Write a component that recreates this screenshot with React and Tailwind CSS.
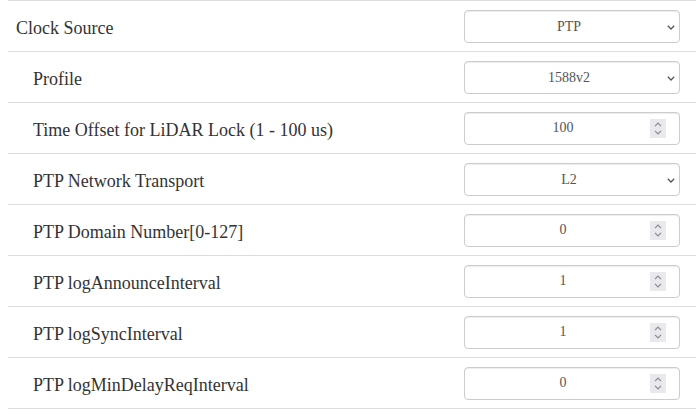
const rows = [
    { label: "Clock Source", type: "select", value: "PTP", options: ["PTP", "NTP", "Internal"], indent: false },
    { label: "Profile", type: "select", value: "1588v2", options: ["1588v2", "802.1AS"], indent: true },
    { label: "Time Offset for LiDAR Lock (1 - 100 us)", type: "number", value: "100", indent: true },
    { label: "PTP Network Transport", type: "select", value: "L2", options: ["L2", "UDP/IP"], indent: true },
    { label: "PTP Domain Number[0-127]", type: "number", value: "0", indent: true },
    { label: "PTP logAnnounceInterval", type: "number", value: "1", indent: true },
    { label: "PTP logSyncInterval", type: "number", value: "1", indent: true },
    { label: "PTP logMinDelayReqInterval", type: "number", value: "0", indent: true },
];

function Spinner() {
    return (
        <span className="absolute right-[14px] top-[7px] w-4 h-[19px] bg-[#e9e9ed] flex flex-col items-center justify-center gap-[3px] pointer-events-none">
            <svg width="8" height="5" viewBox="0 0 8 5" fill="none" stroke="#8a8a8a" strokeWidth="1.2">
                <path d="M1 4.2 L4 1.2 L7 4.2" />
            </svg>
            <svg width="8" height="5" viewBox="0 0 8 5" fill="none" stroke="#8a8a8a" strokeWidth="1.2">
                <path d="M1 0.8 L4 3.8 L7 0.8" />
            </svg>
        </span>
    );
}

function App() {
    return (
        <div className="w-[696px] h-[416px] overflow-hidden bg-white font-['Liberation_Serif',serif] text-[#333]">
            <table className="ml-2 w-[688px] border-collapse">
                <tbody>
                    {rows.map((row) =>
                        <tr key={row.label} className="border-t border-b border-[#dddddd] h-[51px]">
                            <td className={row.indent ? "pl-[25px] pt-1 text-[18px] align-middle" : "pl-2 pt-1 text-[18px] align-middle"}>
                                {row.label}
                            </td>
                            <td className="w-[232px] pr-4 align-middle">
                                {row.type === "select"
                                    ? <div className="relative w-[216px]">
                                        <select
                                            defaultValue={row.value}
                                            className="appearance-none block w-[216px] h-[33px] pl-2 pr-[14px] text-[14px] text-center text-[#555] bg-white border border-[#cccccc] rounded-[4px] shadow-[inset_0_1px_1px_rgba(0,0,0,0.075)]"
                                        >
                                            {row.options.map((o) => <option key={o}>{o}</option>)}
                                        </select>
                                        <svg className="absolute right-[5px] top-[15px] pointer-events-none" width="8" height="5" viewBox="0 0 8 5" fill="none" stroke="#555" strokeWidth="1.3">
                                            <path d="M0.8 0.8 L4 4 L7.2 0.8" />
                                        </svg>
                                    </div>
                                    : <div className="relative w-[216px]">
                                        <input
                                            type="text"
                                            inputMode="numeric"
                                            defaultValue={row.value}
                                            className="block w-[216px] h-[33px] pl-3 pr-[30px] text-[14px] text-center text-[#555] bg-white border border-[#cccccc] rounded-[4px] shadow-[inset_0_1px_1px_rgba(0,0,0,0.075)]"
                                        />
                                        <Spinner />
                                    </div>}
                            </td>
                        </tr>
                    )}
                </tbody>
            </table>
        </div>
    );
}

export default App;
